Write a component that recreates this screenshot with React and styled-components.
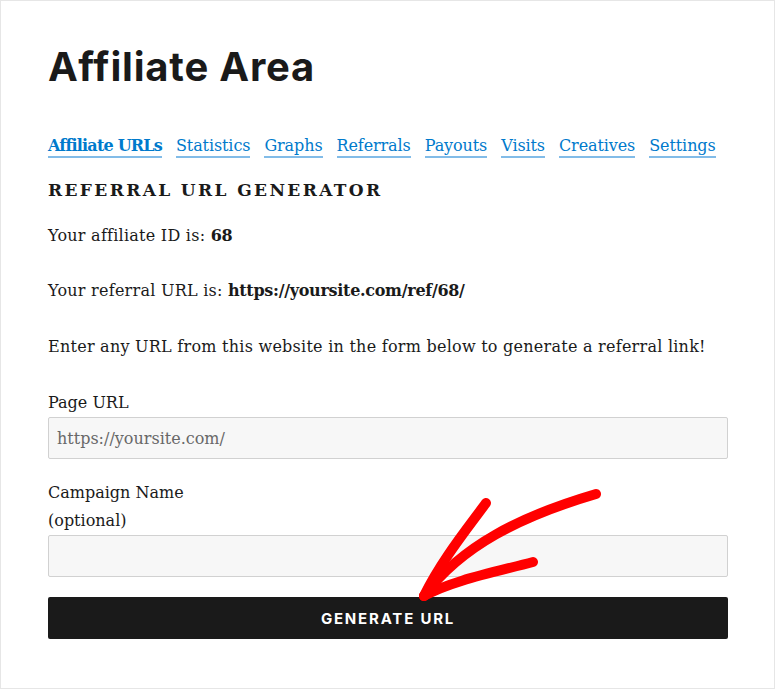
import React from "react";
import styled, { createGlobalStyle } from "styled-components";

const Global = createGlobalStyle`
  html, body { margin: 0; padding: 0; background: #fff; }
  * { box-sizing: border-box; }
`;

const Page = styled.div`
  position: relative;
  width: 775px;
  height: 689px;
  border: 1px solid #e6e6e6;
  background: #fff;
  padding: 41px 46px 0 47px;
  font-family: "DejaVu Serif", "Liberation Serif", serif;
  color: #1a1a1a;
`;

const Title = styled.h1`
  margin: 0;
  font-family: "Inter", "Noto Sans", sans-serif;
  font-weight: 700;
  font-size: 40px;
  line-height: 49px;
  letter-spacing: 0.8px;
  color: #1a1a1a;
`;

const Tabs = styled.nav`
  display: flex;
  gap: 14px;
  margin-top: 41px;
  height: 28px;
  align-items: center;
  white-space: nowrap;
`;

const Tab = styled.a`
  flex: none;
  font-size: 16px;
  color: #007acc;
  text-decoration: none;
  font-weight: ${(p) => (p.$active ? 700 : 400)};
  letter-spacing: ${(p) => (p.$active ? "-0.8px" : "-0.1px")};
  box-shadow: 0 2px 0 0 #82bce8;
  line-height: 20px;
`;

const Heading = styled.h3`
  margin: 16px 0 0;
  font-size: 17px;
  line-height: 28px;
  font-weight: 700;
  letter-spacing: 0.14em;
  text-transform: uppercase;
`;

const Para = styled.p`
  margin: ${(p) => p.$top}px 0 0;
  font-size: 16px;
  line-height: 28px;
  letter-spacing: 0.25px;
  strong { letter-spacing: -0.3px; }
`;

const Label = styled.label`
  display: block;
  margin-top: ${(p) => p.$top}px;
  font-size: 16px;
  line-height: 28px;
`;

const Input = styled.input`
  display: block;
  width: 100%;
  height: 42px;
  margin: 0;
  padding: 0 8px;
  background: #f7f7f7;
  border: 1px solid #d1d1d1;
  border-radius: 2px;
  font-family: "DejaVu Serif", "Liberation Serif", serif;
  font-size: 16px;
  color: #686868;
  &::placeholder { color: #686868; }
`;

const Button = styled.button`
  display: block;
  width: 100%;
  height: 42px;
  margin-top: 20px;
  background: #1a1a1a;
  color: #fff;
  border: none;
  border-radius: 2px;
  font-family: "Inter", "Noto Sans", sans-serif;
  font-weight: 700;
  font-size: 15px;
  letter-spacing: 1.8px;
  text-transform: uppercase;
`;

const Arrow = styled.svg`
  position: absolute;
  left: 0;
  top: 0;
  pointer-events: none;
`;

const tabs = ["Affiliate URLs", "Statistics", "Graphs", "Referrals", "Payouts", "Visits", "Creatives", "Settings"];

export default function App() {
  return (
    <>
      <Global />
      <Page>
        <Title>Affiliate Area</Title>
        <Tabs>
          {tabs.map((t, i) => (
            <Tab key={t} href="#" $active={i === 0}>{t}</Tab>
          ))}
        </Tabs>
        <Heading>Referral URL Generator</Heading>
        <Para $top={18}>Your affiliate ID is: <strong>68</strong></Para>
        <Para $top={27}>Your referral URL is: <strong>https://yoursite.com/ref/68/</strong></Para>
        <Para $top={28}>Enter any URL from this website in the form below to generate a referral link!</Para>
        <Label $top={28}>Page URL</Label>
        <Input placeholder="https://yoursite.com/" />
        <Label $top={20}>Campaign Name<br />(optional)</Label>
        <Input />
        <Button>Generate URL</Button>
        <Arrow width="775" height="689" viewBox="0 0 775 689">
          <g fill="none" stroke="#ff0000" strokeWidth="10" strokeLinecap="round" strokeLinejoin="round">
            <path d="M485 502 C466 528 440 560 423 595" />
            <path d="M595 493 C520 515 460 545 423 595" />
            <path d="M532 561 C490 572 450 580 423 595" />
          </g>
        </Arrow>
      </Page>
    </>
  );
}
